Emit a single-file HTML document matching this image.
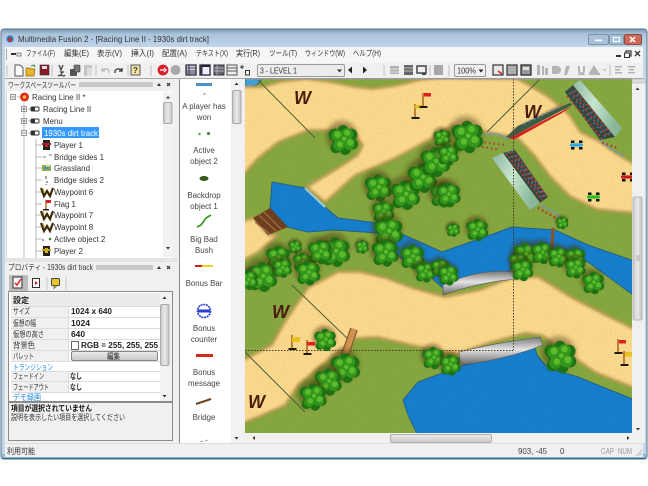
<!DOCTYPE html>
<html><head><meta charset="utf-8"><style>
html,body{margin:0;padding:0;background:#fff;width:648px;height:486px;overflow:hidden}
svg{display:block;filter:blur(.38px)}
text{font-family:"Liberation Sans","Noto Sans CJK JP",sans-serif;font-size:7.9px;fill:#333}
.m{text-anchor:middle;fill:#444}
.b{font-weight:bold;fill:#222}
.l{fill:#1e88e0}
.w{font-family:"Liberation Sans",sans-serif;font-weight:bold;font-style:italic;font-size:18px;fill:#4a1d0c}
</style></head><body>
<svg width="648" height="486" viewBox="0 0 648 486" xmlns="http://www.w3.org/2000/svg">
<defs>
<linearGradient id="tb" x1="0" y1="0" x2="0" y2="1"><stop offset="0" stop-color="#7e9cb6"/><stop offset=".25" stop-color="#a9c3dc"/><stop offset="1" stop-color="#c3d6ea"/></linearGradient>
<linearGradient id="th" x1="0" y1="0" x2="1" y2="0"><stop offset="0" stop-color="#c8c8c8"/><stop offset=".5" stop-color="#e8e8e8"/><stop offset="1" stop-color="#c4c4c4"/></linearGradient>
<linearGradient id="tv" x1="0" y1="0" x2="0" y2="1"><stop offset="0" stop-color="#ececec"/><stop offset="1" stop-color="#c8c8c8"/></linearGradient>
<linearGradient id="roof" x1="0" y1="0" x2="1" y2=".5"><stop offset="0" stop-color="#8fb8a0"/><stop offset=".5" stop-color="#c6e4cf"/><stop offset="1" stop-color="#8ab79c"/></linearGradient>
<linearGradient id="br" x1="0" y1="0" x2="0" y2="1"><stop offset="0" stop-color="#777"/><stop offset=".45" stop-color="#e4e4e4"/><stop offset="1" stop-color="#666"/></linearGradient>
<filter id="s1" x="-10%" y="-10%" width="120%" height="120%"><feGaussianBlur stdDeviation="1.2"/></filter>
<filter id="s2" x="-30%" y="-30%" width="160%" height="160%"><feGaussianBlur stdDeviation="2"/></filter>
<filter id="nz" x="0" y="0" width="100%" height="100%"><feTurbulence type="fractalNoise" baseFrequency=".75" numOctaves="2" seed="4"/><feColorMatrix values="0 0 0 0 .3  0 0 0 0 .25  0 0 0 0 .05  1.6 0 0 0 -.62"/></filter>
<clipPath id="cv"><rect x="245" y="79" width="387" height="354"/></clipPath>
<g id="t">
<circle cx="-1" cy="-3" r="13" fill="#4a3010" opacity=".45" filter="url(#s2)"/>
<g fill="#1f7213"><circle r="9"/><circle cx="-7" cy="-4.500" r="5"/><circle cx="0" cy="-8" r="4.500"/><circle cx="7" cy="-4.500" r="5"/><circle cx="8" cy="3.500" r="4.500"/><circle cx="2" cy="8" r="4.500"/><circle cx="-6" cy="6.500" r="4.500"/></g>
<g fill="#33961c"><circle cx="-4.500" cy="-3.500" r="5"/><circle cx="3.500" cy="-5" r="5"/><circle cx="5" cy="3" r="5"/><circle cx="-3.500" cy="4.500" r="4.600"/><circle r="4"/></g>
<g fill="#5cba2c"><circle cx="-4.500" cy="-4.500" r="2.700"/><circle cx="3.500" cy="-6" r="2.500"/><circle cx="6" cy="2" r="2.700"/><circle cx="-2.500" cy="3.500" r="2.500"/><circle cx="1" cy="-1" r="1.800"/></g>
</g>
<g id="f"><path d="M0 0V-13" stroke="#b06a20" stroke-width="1.600"/><rect x="-3.500" y="0" width="8" height="2" fill="#1a1a10"/></g>
<g id="car"><rect x="-6" y="-4.500" width="3.500" height="2.500" fill="#111"/><rect x="-6" y="2" width="3.500" height="2.500" fill="#111"/><rect x="2" y="-4.500" width="3.500" height="2.500" fill="#111"/><rect x="2" y="2" width="3.500" height="2.500" fill="#111"/><rect x="-7" y="-1.600" width="13" height="3.200" rx="1.200" fill="currentColor"/></g>
<g id="wi"><path d="M-6 -4L-3 4L0 -1L3 4L6 -4" fill="none" stroke="#3d2a00" stroke-width="2.200"/><path d="M-4 -3.600L-2.800 0" stroke="#c9a000" stroke-width="1"/></g>
</defs>

<rect width="648" height="486" fill="#fff"/>
<rect x="1" y="29" width="646" height="430" rx="3" fill="#c3d6ea" stroke="#56707f"/>
<rect x="1.500" y="29.500" width="645" height="18" rx="3" fill="url(#tb)"/>
<rect x="2" y="454" width="644" height="5" fill="#8fb8d6"/>
<rect x="2" y="458" width="644" height="1" fill="#2c6a86"/>
<rect x="5" y="47" width="638" height="410" fill="#f0f0f0"/>
<rect x="5" y="47" width="638" height="16" fill="#f6f6f6"/>
<rect x="5" y="78" width="638" height="1" fill="#a8a8a8"/>

<circle cx="10" cy="39" r="3.600" fill="#2a7fc0"/><circle cx="10" cy="39.500" r="2" fill="#d8262c"/>
<text x="18" y="42" textLength="191" lengthAdjust="spacingAndGlyphs" style="font-size:8.600px;fill:#333">Multimedia Fusion 2 - [Racing Line II - 1930s dirt track]</text>
<rect x="588.500" y="34.500" width="20" height="10" rx="1.500" fill="#a9c2da" stroke="#7c94aa"/><rect x="595" y="39.500" width="7" height="1.600" fill="#fff"/>
<rect x="609.500" y="34.500" width="14" height="10" rx="1.500" fill="#a9c2da" stroke="#7c94aa"/><rect x="613.500" y="37.500" width="6" height="4" fill="none" stroke="#fff"/>
<rect x="624.500" y="34.500" width="17" height="10" rx="1.500" fill="#cf6a56" stroke="#8a4a40"/><path d="M630 37l5 5M635 37l-5 5" stroke="#fff" stroke-width="1.500"/>

<rect x="6" y="49" width="1" height="11" fill="#aaa"/>
<rect x="11" y="53" width="5" height="2" fill="#333"/><rect x="17" y="53" width="4" height="3" fill="none" stroke="#555" stroke-width=".7"/>
<text x="26" y="56" textLength="29" lengthAdjust="spacingAndGlyphs">ファイル(F)</text><text x="64" y="56" textLength="25" lengthAdjust="spacingAndGlyphs">編集(E)</text><text x="97" y="56" textLength="25" lengthAdjust="spacingAndGlyphs">表示(V)</text><text x="131" y="56" textLength="23" lengthAdjust="spacingAndGlyphs">挿入(I)</text><text x="162" y="56" textLength="25" lengthAdjust="spacingAndGlyphs">配置(A)</text><text x="196" y="56" textLength="32" lengthAdjust="spacingAndGlyphs">テキスト(X)</text><text x="236" y="56" textLength="24" lengthAdjust="spacingAndGlyphs">実行(R)</text><text x="269" y="56" textLength="28" lengthAdjust="spacingAndGlyphs">ツール(T)</text><text x="305" y="56" textLength="40" lengthAdjust="spacingAndGlyphs">ウィンドウ(W)</text><text x="353" y="56" textLength="28" lengthAdjust="spacingAndGlyphs">ヘルプ(H)</text>
<rect x="616" y="55" width="5" height="2" fill="#333"/>
<rect x="626" y="51" width="5" height="5" fill="none" stroke="#333" stroke-width="1.200"/><rect x="624.500" y="53" width="5" height="4.500" fill="#f6f6f6" stroke="#333" stroke-width="1"/>
<path d="M635 51l5 5M640 51l-5 5" stroke="#333" stroke-width="1.300"/>

<g fill="none" stroke="#c0c0c0"><path d="M7 65v11M52 65v11M96 65v11M128 65v11M151 65v11M384 65v11M430 65v11M449 65v11M530 65v11M610 65v11"/></g>
<path d="M15 65h5l3 3v8h-8z" fill="#fff" stroke="#555"/>
<path d="M26 68h4l1 1h4l-1 7h-8z" fill="#e9b52a" stroke="#8c6a12" stroke-width=".7"/><path d="M31 66l3-1 1 2" stroke="#3a8a2a" fill="none"/>
<rect x="40" y="65" width="9" height="10" fill="#8a1c26" stroke="#333" stroke-width=".6"/><rect x="42" y="66" width="5" height="3" fill="#ddd"/>
<path d="M59 65l2 5 2-5M58 75a2 2 0 1 0 3-3l3 0a2 2 0 1 0 1 3" fill="none" stroke="#444" stroke-width="1.300"/>
<rect x="70" y="69" width="7" height="7" rx="1" fill="#555"/><rect x="74" y="65" width="6" height="7" rx="1" fill="#777" stroke="#333" stroke-width=".6"/>
<rect x="84" y="65" width="8" height="11" fill="#c4c4c4"/><rect x="87" y="68" width="5" height="8" fill="#ddd"/>
<path d="M102 71a4 4 0 0 1 7 0v2M102 68v3h3" fill="none" stroke="#b8b8b8" stroke-width="1.300"/>
<path d="M122 71a4 4 0 0 0-7 0v2M122 68v3h-3" fill="none" stroke="#444" stroke-width="1.400"/>
<rect x="131" y="65" width="9" height="10" fill="#f2e49a" stroke="#556" stroke-width="1"/><text x="133" y="73" style="font-size:8px;fill:#335;font-weight:bold">?</text>
<circle cx="163" cy="70" r="5.400" fill="#d8202c"/><path d="M160 70h4M164 68l2 2-2 2" stroke="#fff" stroke-width="1.300" fill="none"/>
<circle cx="175.500" cy="70" r="5" fill="#a8a8a8"/>
<rect x="186" y="65" width="10" height="10" fill="#ccd" stroke="#223" stroke-width="1.200"/><path d="M186 68h10M186 71h10M186 73h10M189 65v10" stroke="#223" stroke-width=".8"/>
<rect x="200" y="65" width="10" height="10" fill="#eef" stroke="#223" stroke-width="1.300"/><rect x="200" y="65" width="10" height="2" fill="#223"/><rect x="200" y="65" width="2.500" height="10" fill="#334"/>
<rect x="214" y="65" width="10" height="10" fill="#667" stroke="#333"/><path d="M214 68h10M214 71h10M217 65v10" stroke="#ccc" stroke-width=".7"/>
<rect x="227" y="65" width="10" height="10" fill="#eee" stroke="#555"/><path d="M227 68h10M227 71h10" stroke="#555"/>
<path d="M242 65v4M240 67h4" stroke="#333"/><rect x="245.500" y="70.500" width="4" height="4.500" fill="none" stroke="#333"/>
<rect x="257.500" y="64.500" width="87" height="12" rx="1.500" fill="#ececec" stroke="#9a9a9a"/>
<text x="260" y="73.500" textLength="37" lengthAdjust="spacingAndGlyphs">3 - LEVEL 1</text><path d="M337 69.500h5l-2.500 3z" fill="#333"/>
<path d="M352 66.500v7l-4-3.500z" fill="#222"/><path d="M363 66.500v7l4-3.500z" fill="#222"/>
<rect x="390" y="66" width="9" height="8" fill="#b0b0b0"/><path d="M390 69h9M390 72h9" stroke="#eee" stroke-width=".8"/>
<rect x="404" y="65" width="9" height="10" fill="#666"/><path d="M404 68h9M404 71h9" stroke="#ddd" stroke-width=".8"/>
<rect x="417" y="66" width="9" height="7" fill="none" stroke="#444" stroke-width="1.500"/><rect x="422" y="73" width="4" height="2" fill="#444"/>
<rect x="434" y="65" width="9" height="10" fill="#a8a8a8"/>
<rect x="454.500" y="64.500" width="31" height="12" rx="1.500" fill="#f0f0f0" stroke="#9a9a9a"/><text x="457" y="73.500" textLength="19" lengthAdjust="spacingAndGlyphs">100%</text><path d="M478.500 69.500h5l-2.500 3z" fill="#222"/>
<rect x="493" y="65" width="10" height="10" fill="#e8e8e8" stroke="#333" stroke-width="1.200"/><path d="M498 71l4 3" stroke="#d22" stroke-width="1.600"/>
<rect x="507" y="65" width="10" height="10" fill="#b0b0b0" stroke="#333" stroke-width="1.200"/>
<rect x="521" y="65" width="10" height="10" fill="#999" stroke="#222" stroke-width="1.200"/><rect x="523" y="67" width="6" height="3" fill="#ddd"/>
<g fill="#b4b4b4"><path d="M537 65h3v10h-3zM542 66h2v9h-2zM545 68h3v7h-3z"/><path d="M552 66h5a2 2 0 0 1 0 8h-5z"/><path d="M566 66h4l-3 9h-3z"/><path d="M578 66h2v5a1.500 1.500 0 0 0 3 0v-5h2v5a3.500 3.500 0 0 1-7 0zM578 74h7v1h-7z"/><path d="M594 65l5 8h-10z"/><rect x="589" y="73" width="11" height="2"/><path d="M603 69h3l-1.500 2z"/>
<path d="M615 66h7v1.500h-7zM615 69h5v1.500h-5zM615 72h7v1.500h-7z"/><path d="M628 66h7v1.500h-7zM629 69h5v1.500h-5zM628 72h7v1.500h-7z"/></g>

<rect x="5" y="79" width="172" height="365" fill="#f0f0f0"/>
<text x="8" y="88" textLength="68" lengthAdjust="spacingAndGlyphs">ワークスペースツールバー</text>
<rect x="79" y="82" width="74" height="5" fill="#c8c8c8"/>
<path d="M157 86h4l-2-3z" fill="#333"/><path d="M167 83l3 3M170 83l-3 3" stroke="#333" stroke-width="1.200"/>
<rect x="7" y="91" width="166" height="167" fill="#fff"/>
<path d="M6.500 91v167" stroke="#d8d8d8"/>
<rect x="163" y="92" width="10" height="165" fill="#f2f2f2"/><rect x="163.500" y="102.500" width="8.500" height="21" rx="1.500" fill="url(#th)" stroke="#aaa"/>
<path d="M166 98.500h4l-2-2.500zM166 247h4l-2 2.500z" fill="#333"/>
<g stroke="#b8b8b8" fill="none"><path d="M24 103v155M36 139v119M36 145h6M36 157h6M36 168h6M36 180h6M36 192h6M36 204h6M36 215h6M36 227h6M36 239h6M36 251h6M28 109h3M28 121h3M28 133h3M17 97h4"/></g>
<g fill="#f4f4f4" stroke="#999"><rect x="10.500" y="94.500" width="5" height="5"/><rect x="21.500" y="106.500" width="5" height="5"/><rect x="21.500" y="118.500" width="5" height="5"/><rect x="21.500" y="130.500" width="5" height="5"/></g>
<path d="M11.500 97h3M22.500 133h3M22.500 109h3M24 107.500v3M22.500 121h3M24 119.500v3" stroke="#555" stroke-width=".8"/>
<circle cx="24.500" cy="97" r="4.500" fill="#dc2b1e"/><circle cx="24.500" cy="97" r="1.800" fill="#f3c23a"/>
<g><rect x="31" y="107" width="8" height="4" rx="1" fill="#fff" stroke="#333"/><rect x="31" y="107" width="4" height="4" fill="#333"/>
<rect x="31" y="119" width="8" height="4" rx="1" fill="#fff" stroke="#333"/><rect x="31" y="119" width="4" height="4" fill="#333"/>
<rect x="31" y="131" width="8" height="4" rx="1" fill="#fff" stroke="#333"/><rect x="31" y="131" width="4" height="4" fill="#333"/></g>
<rect x="42" y="127" width="57" height="11" fill="#3399ff"/>
<text x="32" y="100">Racing Line II *</text><text x="43" y="112">Racing Line II</text><text x="43" y="124">Menu</text><text x="44" y="136" style="fill:#fff" textLength="54" lengthAdjust="spacingAndGlyphs">1930s dirt track</text>
<text x="54" y="148">Player 1</text><text x="54" y="160">Bridge sides 1</text><text x="54" y="171">Grassland</text><text x="54" y="183">Bridge sides 2</text><text x="54" y="195">Waypoint 6</text><text x="54" y="207">Flag 1</text><text x="54" y="218">Waypoint 7</text><text x="54" y="230">Waypoint 8</text><text x="54" y="242">Active object 2</text><text x="54" y="254">Player 2</text>
<rect x="43" y="140" width="7" height="10" fill="#222"/><rect x="45" y="143" width="3" height="4" fill="#c22"/><rect x="42" y="143" width="9" height="2" fill="#a22"/>
<path d="M43 157h3M49 155h3" stroke="#777"/>
<rect x="42" y="165" width="9" height="6" fill="#8fae4a"/><rect x="44" y="167" width="5" height="2" fill="#3a8fd0"/><rect x="46" y="165" width="4" height="2" fill="#f0cc70"/>
<path d="M46 176v3M47 181v2M46 184v1" stroke="#666" stroke-width="1.200"/>
<use href="#wi" x="47" y="192"/><use href="#wi" x="47" y="215"/><use href="#wi" x="47" y="227"/>
<path d="M46 200v9" stroke="#a5661e" stroke-width="1.400"/><rect x="46" y="200" width="5" height="3" fill="#d8202c"/><rect x="43" y="209" width="6" height="1.500" fill="#222"/>
<circle cx="43" cy="240" r="1" fill="#6a9a4a"/><circle cx="50" cy="239" r="1.300" fill="#3a8a2a"/>
<rect x="43" y="246" width="7" height="10" fill="#222"/><rect x="45" y="248" width="3" height="5" fill="#d8b820"/><rect x="42" y="249" width="9" height="2" fill="#c8a818"/>

<rect x="5" y="258" width="172" height="4" fill="#e4e4e4"/>
<text x="8" y="270" textLength="85" lengthAdjust="spacingAndGlyphs">プロパティ - 1930s dirt track</text>
<rect x="96" y="265" width="57" height="5" fill="#c8c8c8"/>
<path d="M157 269h4l-2-3z" fill="#333"/><path d="M167 266l3 3M170 266l-3 3" stroke="#333" stroke-width="1.200"/>
<rect x="9" y="275" width="19" height="16" fill="#bdbdbd"/>
<rect x="13" y="277" width="9" height="11" fill="#f4f4f4" stroke="#333"/><path d="M15 283l2 2 4-6" stroke="#d22" stroke-width="1.500" fill="none"/>
<rect x="32.500" y="278.500" width="7" height="9" fill="#fff" stroke="#333"/><path d="M35 281v4l3-2z" fill="#d22"/>
<rect x="51.500" y="278.500" width="8" height="7" rx="1" fill="#e8c828" stroke="#444"/><path d="M54 285.500v3l3-3z" fill="#e8c828" stroke="#444" stroke-width=".6"/>
<path d="M47 277v13M66 277v13" stroke="#c8c8c8"/>
<rect x="8.500" y="291.500" width="164" height="110" fill="#fff" stroke="#8a8a8a"/>
<rect x="11" y="293" width="149" height="13" fill="#ebebeb"/>
<g fill="#f0f0f0"><rect x="11" y="306" width="57" height="56"/><rect x="11" y="371" width="57" height="21"/></g>
<g stroke="#dcdcdc"><path d="M11 306.500h149M11 317.500h149M11 328.500h149M11 339.500h149M11 350.500h149M11 361.500h149M11 371.500h149M11 381.500h149M11 392.500h149"/><path d="M68.500 306v56M68.500 371v21"/></g>
<rect x="160" y="292" width="12" height="109" fill="#f2f2f2"/><rect x="160.500" y="304.500" width="8.500" height="61" rx="1.500" fill="url(#th)" stroke="#aaa"/>
<path d="M162.500 299h4l-2-2.500zM162.500 395h4l-2 2.500z" fill="#333"/>
<text x="13" y="303" class="b" textLength="16" lengthAdjust="spacingAndGlyphs">設定</text>
<text x="13" y="314" textLength="17" lengthAdjust="spacingAndGlyphs">サイズ</text><text x="71" y="314" class="b" textLength="41" lengthAdjust="spacingAndGlyphs">1024 x 640</text>
<text x="13" y="326" textLength="23" lengthAdjust="spacingAndGlyphs">仮想の幅</text><text x="71" y="326" class="b" textLength="19" lengthAdjust="spacingAndGlyphs">1024</text>
<text x="13" y="337" textLength="31" lengthAdjust="spacingAndGlyphs">仮想の高さ</text><text x="71" y="337" class="b" textLength="14" lengthAdjust="spacingAndGlyphs">640</text>
<text x="13" y="348" textLength="22" lengthAdjust="spacingAndGlyphs">背景色</text><rect x="71.500" y="341.500" width="7" height="8" fill="#fff" stroke="#666"/><text x="81" y="348" class="b" textLength="77" lengthAdjust="spacingAndGlyphs">RGB = 255, 255, 255</text>
<text x="13" y="359" textLength="21" lengthAdjust="spacingAndGlyphs">パレット</text><rect x="71.500" y="351.500" width="86" height="9" rx="1.500" fill="url(#tv)" stroke="#888"/><text x="107" y="359" style="fill:#222" textLength="13" lengthAdjust="spacingAndGlyphs">編集</text>
<text x="13" y="370" class="l" textLength="40" lengthAdjust="spacingAndGlyphs">トランジション</text>
<text x="13" y="379" textLength="31" lengthAdjust="spacingAndGlyphs">フェードイン</text><text x="70" y="379" class="b" textLength="12" lengthAdjust="spacingAndGlyphs">なし</text>
<text x="13" y="390" textLength="36" lengthAdjust="spacingAndGlyphs">フェードアウト</text><text x="70" y="390" class="b" textLength="12" lengthAdjust="spacingAndGlyphs">なし</text>
<text x="13" y="400" class="l" textLength="28" lengthAdjust="spacingAndGlyphs">デモ録画</text>
<rect x="8.500" y="402.500" width="164" height="38" fill="#f0f0f0" stroke="#8a8a8a"/>
<text x="11" y="411" class="b" style="fill:#111" textLength="81" lengthAdjust="spacingAndGlyphs">項目が選択されていません</text>
<text x="11" y="420" textLength="114" lengthAdjust="spacingAndGlyphs">説明を表示したい項目を選択してください</text>

<rect x="179" y="79" width="1" height="364" fill="#8a8a8a"/>
<rect x="180" y="79" width="51" height="364" fill="#fff"/>
<rect x="231" y="79" width="12" height="364" fill="#f2f2f2"/><rect x="232.500" y="90.500" width="8.500" height="33" rx="1.500" fill="url(#th)" stroke="#aaa"/>
<path d="M234.500 85h4l-2-2.500zM234.500 437h4l-2 2.500z" fill="#333"/>
<rect x="196" y="83" width="16" height="3" fill="#4a90c8"/><rect x="203" y="93.500" width="3" height="1" fill="#888"/>
<text x="204" y="109" class="m">A player has</text><text x="204" y="120" class="m">won</text>
<circle cx="199.500" cy="134" r="1.200" fill="#5a9a4a"/><circle cx="208.500" cy="133.500" r="1.600" fill="#4a8a3a"/>
<text x="204" y="153" class="m">Active</text><text x="204" y="164" class="m">object 2</text>
<ellipse cx="204" cy="178.500" rx="4.500" ry="2.500" fill="#3a5a1c"/>
<text x="204" y="198" class="m">Backdrop</text><text x="204" y="209" class="m">object 1</text>
<path d="M197 227l4-2 5-7 5-3" stroke="#3c9a20" stroke-width="1.800" fill="none"/>
<text x="204" y="242" class="m">Big Bad</text><text x="204" y="253" class="m">Bush</text>
<rect x="195" y="265" width="7" height="2" fill="#d02020"/><rect x="202" y="265" width="11" height="2" fill="#f0d020"/>
<text x="204" y="286" class="m">Bonus Bar</text>
<circle cx="204" cy="311" r="6.500" fill="#fff" stroke="#2a3ad0" stroke-width="1.600" stroke-dasharray="2 .7"/><rect x="198" y="309.500" width="12" height="3" fill="#2a3ad0"/>
<text x="204" y="331" class="m">Bonus</text><text x="204" y="342" class="m">counter</text>
<rect x="196" y="354" width="17" height="3" fill="#d22a20"/>
<text x="204" y="375" class="m">Bonus</text><text x="204" y="386" class="m">message</text>
<path d="M196 404l15-5" stroke="#6a4020" stroke-width="2"/>
<text x="204" y="420" class="m">Bridge</text>
<path d="M200 442l3-1M205 441l3-1" stroke="#aaa"/>

<g clip-path="url(#cv)">
<rect x="245" y="79" width="387" height="354" fill="#84a73f"/>
<g fill="#0f7dd4" stroke="#1f5f86" stroke-width="1">
<path d="M245 79H262L258 84 245 91Z" fill="#3aa0e0"/>
<path d="M272 182L305 188 325 207 338 218 378 223 402 234 442 252 482 238 512 227 555 230 588 245 640 263V300L588 262 560 255 510 256 512 270 445 290 425 272 405 262 378 233 335 230 308 232 287 227 270 208Z"/>
<path d="M445 372L465 365 535 348 537 355 548 368 578 377 640 402V440H420L408 415 403 400 418 382Z"/>
</g>
<path d="M305 188L325 207" stroke="#9fd8f0" stroke-width="2"/>
<g filter="url(#s1)">
<path fill="#fddc90" stroke="#c79c58" stroke-width="2.500" stroke-linejoin="round" d="M240 87L262 87 280 82 305 79 330 82 355 87 372 89 395 86 420 80 440 78 517 79 532 87 547 96 563 109 570 116 580 132 600 142 615 153 640 168V213L615 211 597 209 570 196 550 176 535 156 517 137 508 136 478 130 452 125 432 138 395 158 355 175 325 202 307 187 340 167 358 155 363 145 355 134 340 130 308 130 278 142 258 158 240 178Z"/>
<path fill="#fddc90" stroke="#c79c58" stroke-width="2.500" stroke-linejoin="round" d="M240 222L254 218 268 235 278 235 258 252 240 262Z"/>
<path fill="#fddc90" stroke="#c79c58" stroke-width="2.500" stroke-linejoin="round" d="M240 362L272 345 285 322 308 288 338 272 360 272 385 278 412 288 445 297 480 290 512 278 538 277 572 298 605 315 640 332V390L595 372 568 353 542 335 525 333 488 343 458 353 445 352 412 345 378 337 355 338 338 352 318 368 298 385 285 405 262 415 240 424Z"/>
</g>
<rect x="245" y="79" width="387" height="354" filter="url(#nz)" opacity=".28"/>
<path d="M253 218L270 208 288 227 268 235Z" fill="#6d3f1e"/>
<path d="M259 215L276 231M264 212L281 229M255 222L270 234" stroke="#a4714a" stroke-width="1.200"/>
<path d="M443 285Q480 268 514 272L517 279Q480 282 443 295Z" fill="url(#br)" stroke="#555" stroke-width=".6"/>
<path d="M459 352Q500 342 540 337L543 345Q505 360 460 365Z" fill="url(#br)" stroke="#555" stroke-width=".6"/>
<path d="M512 130L558 106 566 104 530 126 515 134Z" fill="#7a4a20" opacity=".7" filter="url(#s1)"/>
<path d="M508 139L572 106 562 113 515 139Z" fill="#d92020"/>
<path d="M506 137L518 126 570 103 572 105 510 138Z" fill="#3d5a44"/>
<path d="M524 124L558 108" stroke="#5080b0" stroke-width="1.600" stroke-dasharray="2 3"/>
<path d="M565 92L573 85 615 137 600 140Z" fill="#34483e"/>
<path d="M571 92L608 137M567 96L602 139M575 90L612 135" stroke="#c83a3a" stroke-width="1.700" stroke-dasharray="2 2.500"/>
<path d="M569 93L606 138M573 91L610 136" stroke="#3f7ec0" stroke-width="1.500" stroke-dasharray="1.500 4"/>
<path d="M573 85L580 80 622 128 615 137Z" fill="url(#roof)"/>
<path d="M503 153L515 150 548 197 540 203Z" fill="#34483e"/>
<path d="M506 153L542 200M510 152L545 198M513 151L547 196" stroke="#c83a3a" stroke-width="1.700" stroke-dasharray="2 2.500"/>
<path d="M508 152L544 199M512 151L546 197" stroke="#3f7ec0" stroke-width="1.500" stroke-dasharray="1.500 4"/>
<path d="M492 158L503 153 540 203 530 210Z" fill="url(#roof)"/>
<path d="M484 135Q498 131 508 140" stroke="#7a9aa0" stroke-width="1.500" fill="none"/>
<path d="M480 142L505 145M482 147L497 149" stroke="#b03a3a" stroke-width="2" stroke-dasharray="1.500 3"/>
<path d="M600 140Q610 150 624 156" stroke="#7a9aa0" stroke-width="1.500" fill="none"/>
<path d="M602 143L618 148" stroke="#b03a3a" stroke-width="2.500" stroke-dasharray="1.500 3"/>
<path d="M540 205Q557 212 564 222" stroke="#7a9aa0" stroke-width="1.500" fill="none"/>
<path d="M538 208L556 218" stroke="#b03a3a" stroke-width="3" stroke-dasharray="1.500 3"/>
<path d="M553 228L552 248" stroke="#8a5228" stroke-width="3"/>
<g stroke="#555c34" stroke-width="1" fill="none"><path d="M258 80L315 138M540 79L487 132M292 285L352 343M245 352L305 412"/></g>
<g stroke="#4a3a20" stroke-width="1" fill="none" stroke-dasharray="1.500 1.500"><path d="M513.500 79V350M245 350.500H513"/></g>
<path d="M354 329L345 355" stroke="#8a5a2e" stroke-width="8"/><path d="M354 329L345 355" stroke="#cf9250" stroke-width="5.500"/>
<use href="#t" transform="translate(343 140) scale(1.200)"/>
<use href="#t" transform="translate(378 188) scale(1.100)"/><use href="#t" transform="translate(405 195) scale(1.200)"/><use href="#t" transform="translate(422 178) scale(1.200)"/><use href="#t" transform="translate(435 162) scale(1.200)"/><use href="#t" transform="translate(442 195) scale(1)"/><use href="#t" transform="translate(442 138) scale(.7)"/>
<use href="#t" transform="translate(383 212) scale(.9)"/><use href="#t" transform="translate(388 232) scale(1.200)"/><use href="#t" transform="translate(385 253) scale(1.100)"/><use href="#t" transform="translate(412 257) scale(1)"/><use href="#t" transform="translate(362 247) scale(.55)"/><use href="#t" transform="translate(335 252) scale(1.200)"/><use href="#t" transform="translate(320 252) scale(1)"/><use href="#t" transform="translate(295 247) scale(.55)"/><use href="#t" transform="translate(278 258) scale(1)"/><use href="#t" transform="translate(302 262) scale(.75)"/>
<use href="#t" transform="translate(467 137) scale(1.300)"/><use href="#t" transform="translate(448 155) scale(.85)"/><use href="#t" transform="translate(448 195) scale(1)"/><use href="#t" transform="translate(453 230) scale(.55)"/><use href="#t" transform="translate(477 230) scale(.9)"/><use href="#t" transform="translate(562 223) scale(.5)"/>
<use href="#t" transform="translate(525 255) scale(1)"/><use href="#t" transform="translate(542 253) scale(.9)"/><use href="#t" transform="translate(558 257) scale(.85)"/><use href="#t" transform="translate(575 258) scale(.85)"/><use href="#t" transform="translate(518 262) scale(.75)"/>
<use href="#t" transform="translate(262 277) scale(1.200)"/><use href="#t" transform="translate(282 268) scale(.8)"/><use href="#t" transform="translate(308 273) scale(1)"/><use href="#t" transform="translate(248 280) scale(.8)"/><use href="#t" transform="translate(425 272) scale(.85)"/><use href="#t" transform="translate(440 268) scale(.75)"/>
<use href="#t" transform="translate(325 340) scale(.9)"/><use href="#t" transform="translate(345 368) scale(1.200)"/><use href="#t" transform="translate(328 382) scale(1.100)"/><use href="#t" transform="translate(313 397) scale(1.100)"/><use href="#t" transform="translate(433 358) scale(.9)"/>
<use href="#t" transform="translate(450 365) scale(.85)"/><use href="#t" transform="translate(522 270) scale(.9)"/><use href="#t" transform="translate(575 268) scale(.85)"/><use href="#t" transform="translate(593 283) scale(.9)"/><use href="#t" transform="translate(560 357) scale(1.300)"/><use href="#t" transform="translate(448 275) scale(.85)"/>
<text class="w" x="294" y="104">W</text><text class="w" x="524" y="118">W</text><text class="w" x="272" y="318">W</text><text class="w" x="248" y="408">W</text>
<use href="#f" x="415" y="117"/><rect x="415" y="105" width="7" height="3.500" fill="#e8c020"/>
<use href="#f" x="423" y="106"/><rect x="424" y="93" width="7" height="3.500" fill="#e02020"/>
<use href="#f" x="292" y="348"/><rect x="292" y="337" width="8" height="5" fill="#e8c020"/>
<use href="#f" x="307" y="353"/><rect x="307" y="342" width="8" height="3.500" fill="#e02020"/>
<use href="#f" x="618" y="352"/><rect x="619" y="340" width="7" height="3.500" fill="#e02020"/>
<use href="#f" x="624" y="364"/><rect x="625" y="352" width="7" height="4.500" fill="#e8c020"/>
<use href="#car" x="577" y="145" color="#30a8e8"/>
<use href="#car" x="594" y="197" color="#28c020"/>
<use href="#car" x="628" y="177" color="#c81818"/>
</g>
<rect x="245" y="78" width="387" height="1.500" fill="#9a9a9a"/>

<rect x="632" y="79" width="13" height="364" fill="#f0f0f0"/>
<rect x="632" y="79" width="13" height="4" fill="#ddd" stroke="#aaa" stroke-width=".5"/>
<path d="M635.500 90h4l-2-2.500z" fill="#333"/>
<rect x="633" y="197" width="9" height="123" rx="1.500" fill="url(#th)" stroke="#b8b8b8"/>
<path d="M636 256h4M636 258h4M636 260h4" stroke="#888" stroke-width=".6"/>
<path d="M636 428h4l-2 2.500z" fill="#333"/>
<rect x="245" y="433" width="387" height="10" fill="#f0f0f0"/>
<rect x="390.500" y="434.500" width="101" height="8" rx="1.500" fill="url(#tv)" stroke="#b0b0b0"/>
<path d="M255 436v4l-2.500-2zM627 436v4l2.500-2z" fill="#333"/>
<rect x="5" y="443" width="638" height="1" fill="#dedede"/>

<text x="7" y="454" textLength="28" lengthAdjust="spacingAndGlyphs">利用可能</text>
<text x="518" y="454" style="fill:#444" textLength="29" lengthAdjust="spacingAndGlyphs">903, -45</text><text x="560" y="454" style="fill:#444">0</text>
<text x="601" y="454" style="fill:#999" textLength="13" lengthAdjust="spacingAndGlyphs">CAP</text><text x="618" y="454" style="fill:#999" textLength="14" lengthAdjust="spacingAndGlyphs">NUM</text>
<path d="M636 456l6-6M639 456l3-3" stroke="#bbb"/>
</svg>
</body></html>
